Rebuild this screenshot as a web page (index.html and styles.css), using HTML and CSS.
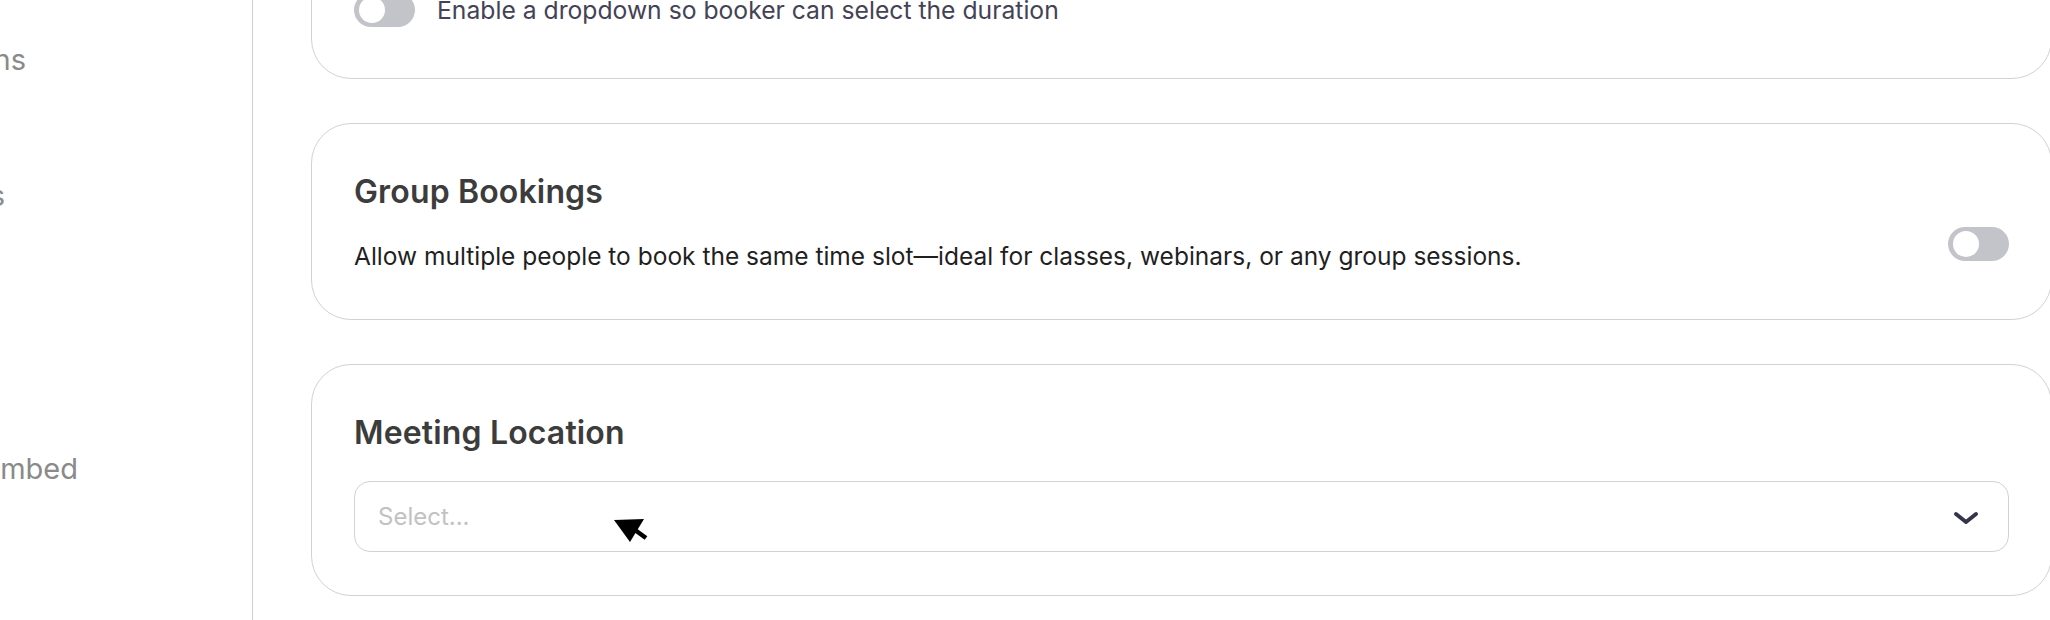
FILE: index.html
```html
<!DOCTYPE html>
<html lang="en">
<head>
<meta charset="utf-8">
<title>Event settings</title>
<link rel="stylesheet" href="styles.css">
</head>
<body>
<div class="app">
  <aside class="sidebar">
    <nav class="nav">
      <div class="nav-item nav-item--a"><span>Notifications</span></div>
      <div class="nav-item nav-item--b"><span>Limits</span></div>
      <div class="nav-item nav-item--c"><span>Apps</span></div>
      <div class="nav-item nav-item--d"><span>Embed</span></div>
    </nav>
  </aside>
  <main class="main">
    <div class="stack">
      <section class="card">
        <div class="switch-row">
          <span class="toggle"><span class="knob"></span></span>
          <span class="switch-label">Enable a dropdown so booker can select the duration</span>
        </div>
      </section>
      <section class="card card--group">
        <div class="card-row">
          <div class="card-text">
            <h2 class="card-title">Group Bookings</h2>
            <p class="card-desc">Allow multiple people to book the same time slot—ideal for classes, webinars, or any group sessions.</p>
          </div>
          <span class="toggle toggle--end"><span class="knob"></span></span>
        </div>
      </section>
      <section class="card card--location">
        <h2 class="card-title">Meeting Location</h2>
        <div class="select">
          <span class="select-placeholder">Select...</span>
          <svg class="chevron" width="28" height="16" viewBox="0 0 28 16" aria-hidden="true">
            <path d="M4 5 L14 13 L24 5" fill="none" stroke="#34344a" stroke-width="4" stroke-linecap="round" stroke-linejoin="round"/>
          </svg>
        </div>
        <svg class="cursor" width="38" height="28" viewBox="0 0 38 28" aria-hidden="true">
          <polygon points="2,3 32,2 18,25" fill="#000"/>
          <line x1="23" y1="13" x2="34" y2="21" stroke="#000" stroke-width="4.5"/>
        </svg>
      </section>
    </div>
  </main>
</div>
</body>
</html>
```
FILE: styles.css
```css
* { box-sizing: border-box; }
html, body {
  margin: 0;
  padding: 0;
  background: #ffffff;
}
body {
  font-family: "Inter", "DejaVu Sans", sans-serif;
  width: 2050px;
  height: 620px;
  overflow: hidden;
}
.app {
  display: flex;
  height: 620px;
  overflow: hidden;
}
.sidebar {
  flex: 0 0 253px;
  border-right: 1px solid #cfcfcf;
  overflow: hidden;
}
.nav {
  display: flex;
  flex-direction: column;
  gap: 96.3px;
  padding-top: 40px;
}
.nav-item {
  height: 40px;
  line-height: 40px;
  font-size: 29px;
  color: #8a8a8a;
  white-space: nowrap;
  display: flex;
  justify-content: flex-end;
  overflow: hidden;
}
.nav-item span { flex: 0 0 auto; }
.nav-item--a { width: 26px; }
.nav-item--b { width: 5px; }
.nav-item--c { width: 0; }
.nav-item--d { width: 78px; }

.main {
  flex: 1 1 auto;
  padding: 0 0 0 58px;
  overflow: hidden;
}
.stack {
  display: flex;
  flex-direction: column;
  gap: 44px;
  margin-top: -58px;
  margin-right: -2px;
}
.card {
  position: relative;
  border: 1px solid #d2d2d2;
  border-radius: 40px;
  padding: 42px 42px 43px 42px;
  background: #fff;
}
.card--group {
  padding-bottom: 45px;
}
.switch-row {
  display: flex;
  align-items: center;
  gap: 22px;
  height: 50px;
}
.toggle {
  flex: 0 0 auto;
  width: 61px;
  height: 34px;
  border-radius: 17px;
  background: #c3c4ca;
  padding: 4px 5px;
  display: flex;
  align-items: center;
}
.knob {
  width: 26px;
  height: 26px;
  border-radius: 50%;
  background: #fff;
}
.switch-label {
  font-size: 24.7px;
  color: #434355;
  white-space: nowrap;
}
.card-row {
  display: flex;
  justify-content: space-between;
  align-items: flex-end;
}
.card-title {
  margin: 0;
  font-size: 32px;
  line-height: 52px;
  font-weight: 600;
  letter-spacing: 0.15px;
  color: #3c3c3c;
}
.card-desc {
  margin: 20px 0 0;
  font-size: 24.5px;
  line-height: 36px;
  color: #1f1f1f;
}
.toggle--end {
  margin-bottom: 13px;
}
.select {
  margin-top: 22px;
  height: 71px;
  border: 1px solid #d2d2d2;
  border-radius: 16px;
  display: flex;
  align-items: center;
  justify-content: space-between;
  padding: 0 28px 0 23px;
}
.select-placeholder {
  font-size: 24px;
  color: #c2c2c2;
}
.chevron { display: block; }
.cursor {
  position: absolute;
  left: 300px;
  top: 152px;
}
```
